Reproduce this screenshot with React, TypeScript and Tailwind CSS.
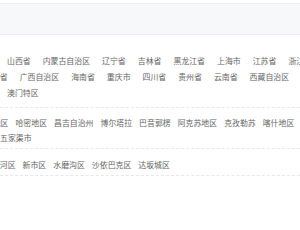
type Row = {
  offset: string;
  items: string[];
};

const PROVINCES: Row[] = [
  {
    offset: "ml-[7px]",
    items: ["山西省", "内蒙古自治区", "辽宁省", "吉林省", "黑龙江省", "上海市", "江苏省", "浙江省"],
  },
  {
    offset: "ml-[-16px]",
    items: ["广东省", "广西自治区", "海南省", "重庆市", "四川省", "贵州省", "云南省", "西藏自治区", "陕西省"],
  },
  {
    offset: "ml-[7px]",
    items: ["澳门特区"],
  },
];

const CITIES: Row[] = [
  {
    offset: "ml-[-31px]",
    items: ["吐鲁番地区", "哈密地区", "昌吉自治州", "博尔塔拉", "巴音郭楞", "阿克苏地区", "克孜勒苏", "喀什地区", "和田地区"],
  },
  {
    offset: "ml-[0px]",
    items: ["五家渠市"],
  },
];

const DISTRICTS: Row[] = [
  {
    offset: "ml-[-16px]",
    items: ["头屯河区", "新市区", "水磨沟区", "沙依巴克区", "达坂城区"],
  },
];

function ItemRow({ row, gap }: { row: Row; gap: string }) {
  return (
    <div className={`flex whitespace-nowrap ${gap} ${row.offset}`}>
      {row.items.map((name) => (
        <span key={name} className="shrink-0 cursor-pointer hover:text-[#1989fa]">
          {name}
        </span>
      ))}
    </div>
  );
}

export default function App() {
  return (
    <div
      className="w-[300px] h-[230px] overflow-hidden bg-white text-[7.9px] text-[#666666]"
      style={{ fontFamily: '"Noto Sans CJK SC", "Noto Sans", sans-serif' }}
    >
      <div className="mt-[3px] h-[32px] bg-[#f7f8fa] border-y border-[#ebedf0]" />

      <section className="pt-[18px] pb-[6px] leading-[16px] border-b border-dashed border-[#e8e8e8]">
        {PROVINCES.map((r, i) => (
          <ItemRow key={i} row={r} gap="gap-[12px]" />
        ))}
      </section>

      <section className="pt-[7px] pb-[3px] leading-[15px] border-b border-dashed border-[#e8e8e8]">
        {CITIES.map((r, i) => (
          <ItemRow key={i} row={r} gap="gap-[7px]" />
        ))}
      </section>

      <section className="pt-[8px] pb-[3px] leading-[15px] border-b border-dashed border-[#e8e8e8]">
        {DISTRICTS.map((r, i) => (
          <ItemRow key={i} row={r} gap="gap-[7px]" />
        ))}
      </section>
    </div>
  );
}
